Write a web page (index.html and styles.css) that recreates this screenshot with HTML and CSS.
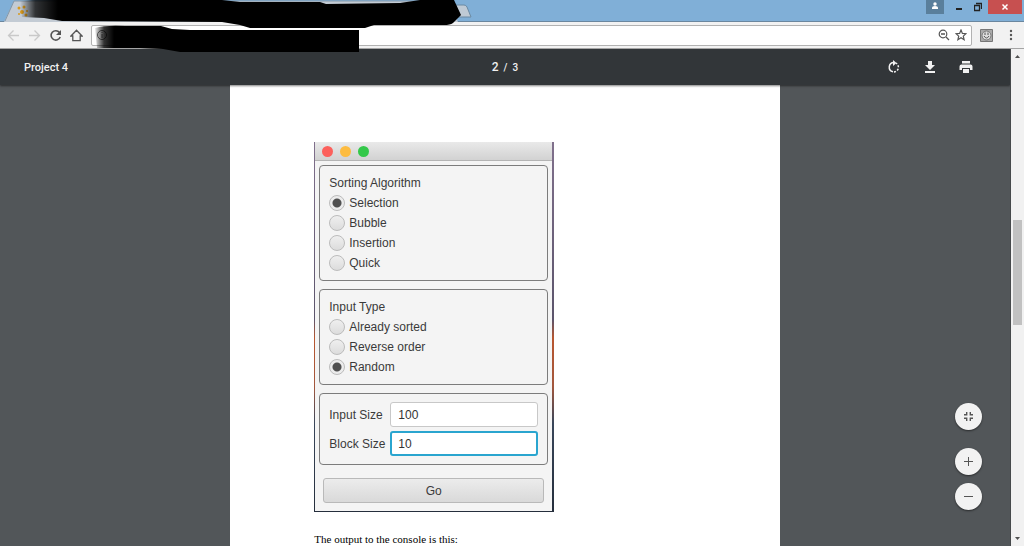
FILE: index.html
```html
<!DOCTYPE html>
<html lang="en">
  <head>
    <meta charset="utf-8">
    <title>Project 4</title>
    <meta name="viewport" content="width=device-width">
    <link rel="stylesheet" href="styles.css">
  </head>
  <body>
    <header class="browser">
      <div class="tabstrip">
        <svg class="tabs" width="474" height="22" viewBox="0 0 474 22">
          <path d="M4 22L14 1H448L458 22Z" fill="#c3cbd4"/>
          <path d="M5 21L14 1H448" fill="none" stroke="#8397a8"/>
          <path d="M448 5H464Q466 5 467 7L471 17H453Z" fill="#bfcad5" stroke="#6b8aa4"/>
          <g fill="#d99a1c"><circle cx="19" cy="8" r="1.500"/><circle cx="24" cy="7" r="1.500"/><circle cx="22" cy="12" r="2"/><circle cx="19" cy="14" r="1"/><circle cx="26" cy="15" r="1.500"/><circle cx="27" cy="11" r="1"/></g>
        </svg>
        <div class="winbtns">
          <button class="user" aria-label="User">
            <svg width="18" height="14" viewBox="0 0 18 14"><circle cx="9" cy="4" r="1.700" fill="#fff"/><path d="M6 8Q6 6 9 6T12 8V9H6Z" fill="#fff"/></svg>
          </button>
          <button class="min" aria-label="Minimize">
            <svg width="8" height="14" viewBox="0 0 8 14"><path d="M1 8H7V10H1Z" fill="#222"/></svg>
          </button>
          <button class="max" aria-label="Restore">
            <svg width="8" height="14" viewBox="0 0 8 14"><path d="M.5 5.500H5.500V10.500H.5ZM2 3.500H7.500V9" fill="none" stroke="#222" stroke-width="1.300"/></svg>
          </button>
          <button class="close" aria-label="Close">
            <svg width="8" height="14" viewBox="0 0 8 14"><path d="M1.500 4.500L6.500 9.500M6.500 4.500L1.500 9.500" stroke="#fff" stroke-width="1.500"/></svg>
          </button>
        </div>
      </div>
      <div class="navbar">
        <button aria-label="Back"><svg width="13" height="13" viewBox="0 0 13 13"><path d="M12 6.500H2M6.500 1.500L1.500 6.500L6.500 11.500" fill="none" stroke="#c9c9c9" stroke-width="1.300"/></svg></button>
        <button aria-label="Forward"><svg width="13" height="13" viewBox="0 0 13 13"><path d="M1 6.500H11M6.500 1.500L11.500 6.500L6.500 11.500" fill="none" stroke="#c9c9c9" stroke-width="1.300"/></svg></button>
        <button aria-label="Reload"><svg width="13" height="13" viewBox="0 0 13 13"><path d="M10.500 3.500A4.700 4.700 0 1 0 11.200 8" fill="none" stroke="#555" stroke-width="1.600"/><path d="M12 1V6H7Z" fill="#555"/></svg></button>
        <button aria-label="Home"><svg width="13" height="13" viewBox="0 0 13 13"><path d="M6.500 1.200L1 7H2.800V11.700H10.200V7H12Z" fill="none" stroke="#555" stroke-width="1.300"/></svg></button>
        <div class="urlbox">
          <svg width="12" height="12" viewBox="0 0 12 12"><circle cx="6" cy="6" r="4.500" fill="none" stroke="#666"/><path d="M6 5V9M6 3V4" stroke="#666"/></svg>
          <input type="text" aria-label="Address">
          <svg width="12" height="12" viewBox="0 0 12 12"><circle cx="5" cy="5" r="3.800" fill="none" stroke="#555" stroke-width="1.200"/><path d="M3 5H7M8 8L11 11" stroke="#555" stroke-width="1.300"/></svg>
          <svg width="12" height="12" viewBox="0 0 12 12"><path d="M6 1L7.400 4.400L11 4.700L8.300 7.100L9.100 10.700L6 8.800L2.900 10.700L3.700 7.100L1 4.700L4.600 4.400Z" fill="none" stroke="#555" stroke-width="1.200"/></svg>
        </div>
        <button class="ext" aria-label="Extension"><svg width="13" height="13" viewBox="0 0 13 13"><path d="M.5 .5H12.500V12.500H.5Z" fill="#aaa" stroke="#777"/><circle cx="6.500" cy="6.500" r="4.500" fill="#ddd" stroke="#777"/><path d="M5 3.500V6M8 3.500V6M4 7Q6.500 11 9 7" fill="none" stroke="#555"/></svg></button>
        <button class="more" aria-label="Menu"><svg width="4" height="12" viewBox="0 0 4 12" fill="#555"><circle cx="2" cy="2" r="1.200"/><circle cx="2" cy="6" r="1.200"/><circle cx="2" cy="10" r="1.200"/></svg></button>
      </div>
      <!-- marker strokes over the tab title and the address -->
      <svg class="scribble" width="474" height="54" viewBox="0 0 474 54">
        <defs>
          <linearGradient id="fade" gradientUnits="userSpaceOnUse" x1="20" y1="0" x2="58" y2="0"><stop offset="0" stop-opacity="0"/><stop offset=".4" stop-opacity=".75"/><stop offset="1"/></linearGradient>
          <linearGradient id="fade2" gradientUnits="userSpaceOnUse" x1="94" y1="0" x2="114" y2="0"><stop offset="0" stop-opacity="0"/><stop offset=".5" stop-opacity=".8"/><stop offset="1"/></linearGradient>
        </defs>
        <path d="M20 1L32 0H222L240 2L320 2L326 4L400 3L420 0H454L461 15L453 23Q450 25 444 25L374 25L365 28L328 28L250 28L240 25L222 22L62 21L44 18L22 17Z" fill="url(#fade)"/>
        <path d="M95 28Q105 25 125 26L161 26L172 29L190 30H359V52H180L163 49L140 48L97 48Z" fill="url(#fade2)"/>
      </svg>
    </header>

    <div class="content">
      <main class="viewer">
        <div class="pdfbar">
          <span class="title">Project 4</span>
          <span class="pages"><b>2</b><span>/</span><span>3</span></span>
          <div class="tools">
            <button aria-label="Rotate"><svg width="14" height="14" viewBox="0 0 14 14"><path d="M7 2.500A4.700 4.700 0 0 0 6 11.800" fill="none" stroke="#f1f1f1" stroke-width="1.500"/><path d="M7 11.900A4.700 4.700 0 0 0 9 3.100" fill="none" stroke="#f1f1f1" stroke-width="1.500" stroke-dasharray="2 1.500"/><path d="M6 0L9.500 3L6 6Z" fill="#f1f1f1"/></svg></button>
            <button aria-label="Download"><svg width="14" height="14" viewBox="0 0 14 14"><path d="M5 1H9V5H12L7 10L2 5H5ZM2 11H12V13H2Z" fill="#f1f1f1"/></svg></button>
            <button aria-label="Print"><svg width="14" height="14" viewBox="0 0 14 14"><path d="M3 1H11V3.500H3ZM2.500 4.500H11.500Q13.500 4.500 13.500 6.500V10H11V8H3V10H.5V6.500Q.5 4.500 2.500 4.500ZM4 9H10V13H4Z" fill="#f1f1f1"/></svg></button>
          </div>
        </div>
        <article class="page">
          <div class="desktop">
            <form class="app">
              <div class="appbar"><i class="red"></i><i class="yellow"></i><i class="green"></i></div>
              <div class="panels">
                <div class="panel" role="radiogroup" aria-labelledby="algTitle">
                  <div class="row" id="algTitle">Sorting Algorithm</div>
                  <label class="row"><input type="radio" name="alg" checked>Selection</label>
                  <label class="row"><input type="radio" name="alg">Bubble</label>
                  <label class="row"><input type="radio" name="alg">Insertion</label>
                  <label class="row"><input type="radio" name="alg">Quick</label>
                </div>
                <div class="panel" role="radiogroup" aria-labelledby="typeTitle">
                  <div class="row" id="typeTitle">Input Type</div>
                  <label class="row"><input type="radio" name="type">Already sorted</label>
                  <label class="row"><input type="radio" name="type">Reverse order</label>
                  <label class="row"><input type="radio" name="type" checked>Random</label>
                </div>
                <div class="panel sizes">
                  <label for="inputSize">Input Size</label>
                  <input type="text" id="inputSize" value="100">
                  <label for="blockSize">Block Size</label>
                  <input type="text" id="blockSize" class="active" value="10">
                </div>
                <button type="button" class="go">Go</button>
              </div>
            </form>
          </div>
          <p>The output to the console is this:</p>
        </article>
        <div class="zoom">
          <button class="fit" aria-label="Fit to page"><svg width="11" height="11" viewBox="0 0 11 11"><path d="M1 3.700H3.700V1M7.300 1V3.700H10M10 7.300H7.300V10M3.700 10V7.300H1" fill="none" stroke="#555" stroke-width="1.400"/></svg></button>
          <button aria-label="Zoom in"><svg width="11" height="11" viewBox="0 0 11 11"><path d="M1 5.500H10M5.500 1V10" stroke="#555"/></svg></button>
          <button aria-label="Zoom out"><svg width="11" height="11" viewBox="0 0 11 11"><path d="M1 5.500H10" stroke="#555"/></svg></button>
        </div>
      </main>
      <div class="scrollbar">
        <svg width="7" height="4" viewBox="0 0 7 4"><path d="M1 4L3.500 1L6 4Z" fill="#505050"/></svg>
        <div class="track"><div class="thumb"></div></div>
        <svg width="7" height="4" viewBox="0 0 7 4"><path d="M1 0L3.500 3L6 0Z" fill="#505050"/></svg>
      </div>
    </div>
  </body>
</html>
```

FILE: styles.css
```css
* { margin: 0; padding: 0; box-sizing: border-box; }
body {
  display: flex;
  flex-direction: column;
  height: 100vh;
  overflow: hidden;
  font-family: Roboto, sans-serif;
}
button {
  display: flex;
  align-items: center;
  justify-content: center;
  border: 0;
  background: none;
}
svg { display: block; flex: none; }

/* browser frame */
.browser { position: relative; z-index: 2; }
.tabstrip {
  display: flex;
  justify-content: space-between;
  height: 22px;
  background: #80afd7;
  border-bottom: 1px solid #6b879f;
}
.winbtns { display: flex; margin-right: 2px; }
.winbtns button { height: 14px; width: 19px; }
.winbtns .user { width: 18px; background: #5a7f9c; margin-right: 5px; }
.winbtns .close { width: 34px; background: #c75050; margin-left: 1px; }

.navbar {
  display: flex;
  align-items: center;
  gap: 8px;
  height: 27px;
  padding: 0 11px 0 7px;
  background: #f2f2f2;
  border-bottom: 1px solid #a5a5a5;
}
.urlbox {
  flex: 1;
  display: flex;
  align-items: center;
  gap: 5px;
  height: 21px;
  padding: 0 4px;
  background: #fff;
  border: 1px solid #b2b2b2;
  border-radius: 2px;
}
.urlbox input {
  flex: 1;
  min-width: 0;
  border: 0;
  outline: 0;
}
.more { margin-left: 8px; }
.scribble {
  position: absolute;
  top: 0;
  left: 0;
  pointer-events: none;
}

/* pdf viewer */
.content { flex: 1; display: flex; min-height: 0; }
.viewer {
  position: relative;
  flex: 1;
  overflow: hidden;
  background: #525659;
  border-right: 1px solid #46494b;
}
.pdfbar {
  position: relative;
  display: grid;
  grid-template-columns: 1fr auto 1fr;
  align-items: center;
  height: 36px;
  padding: 0 24px;
  background: #323639;
  color: #f1f1f1;
  font-size: 10px;
  box-shadow: 0 1px 2px rgba(0, 0, 0, .5);
}
.title { font-weight: 500; font-size: 11px; }
.pages { display: flex; align-items: baseline; gap: 5px; font-weight: 500; }
.pages b { font-size: 12px; font-weight: 500; }
.tools {
  display: flex;
  justify-content: flex-end;
  gap: 22px;
  margin-right: 13px;
}

.page {
  width: 54.4%;
  min-width: 400px;
  height: 100%;
  margin: 0 auto;
  padding: 57px 84px 0;
  background: #fff;
}
.page p {
  margin-top: 20px;
  font: 11px/14px "Liberation Serif", serif;
  color: #000;
}

.desktop {
  width: 240px;
  padding: 0 2px 1px 1px;
  background: linear-gradient(#80708c 0%, #5b546b 48%, #b8562f 53%, #a3573d 66%, #39465a 76%, #252e3c 100%);
}
.app {
  background: #f4f4f4;
  color: #3a3a3a;
  font: 12px/20px "Liberation Sans", sans-serif;
}
.appbar {
  display: flex;
  align-items: center;
  gap: 7px;
  height: 19px;
  padding-left: 7px;
  background: linear-gradient(#e9e9e9, #d2d2d2);
  border-bottom: 1px solid #b4b4b4;
}
.appbar i { width: 11px; height: 11px; border-radius: 50%; }
.red { background: #fc605c; }
.yellow { background: #fdbc40; }
.green { background: #34c84a; }

.panels {
  display: flex;
  flex-direction: column;
  gap: 8px;
  padding: 4px 4px 8px;
}
.panel {
  padding: 7px 9px;
  border: 1px solid #7c7c7c;
  border-radius: 4px;
}
.row { display: flex; align-items: center; gap: 4px; }
.row input {
  appearance: none;
  width: 16px;
  height: 16px;
  border: 1px solid #bcbcbc;
  border-radius: 50%;
  background: linear-gradient(#efefef, #dcdcdc);
}
.row input:checked {
  background: radial-gradient(circle, #505050 4px, #ececec 5px);
}
.sizes {
  display: grid;
  grid-template-columns: auto 1fr;
  align-items: center;
  gap: 4px 5px;
  padding: 8px 9px;
}
.sizes input {
  width: 100%;
  min-width: 0;
  height: 25px;
  padding: 0 7px;
  border: 1px solid #c8c8c8;
  border-radius: 3px;
  outline: 0;
  background: #fff;
  color: #333;
  font: inherit;
}
.sizes .active { border: 2px solid #2aa5cf; padding: 0 6px; }
.go {
  height: 25px;
  margin: 5px 4px 0;
  border: 1px solid #b9b9b9;
  border-radius: 3px;
  background: linear-gradient(#ececec, #d9d9d9);
  color: #3a3a3a;
  font: inherit;
}

.zoom {
  position: absolute;
  right: 28px;
  bottom: 36px;
  display: flex;
  flex-direction: column;
  gap: 8px;
}
.zoom button {
  width: 27px;
  height: 27px;
  border-radius: 50%;
  background: #f2f2f2;
  box-shadow: 0 1px 2px rgba(0, 0, 0, .5);
}
.zoom .fit { margin-bottom: 10px; }

.scrollbar {
  display: flex;
  flex-direction: column;
  align-items: center;
  width: 13px;
  padding: 5px 1px;
  background: #f1f1f1;
}
.track { flex: 1; width: 100%; padding: 0 1px; }
.thumb { height: 22%; margin-top: 162px; background: #c1c1c1; }
```
